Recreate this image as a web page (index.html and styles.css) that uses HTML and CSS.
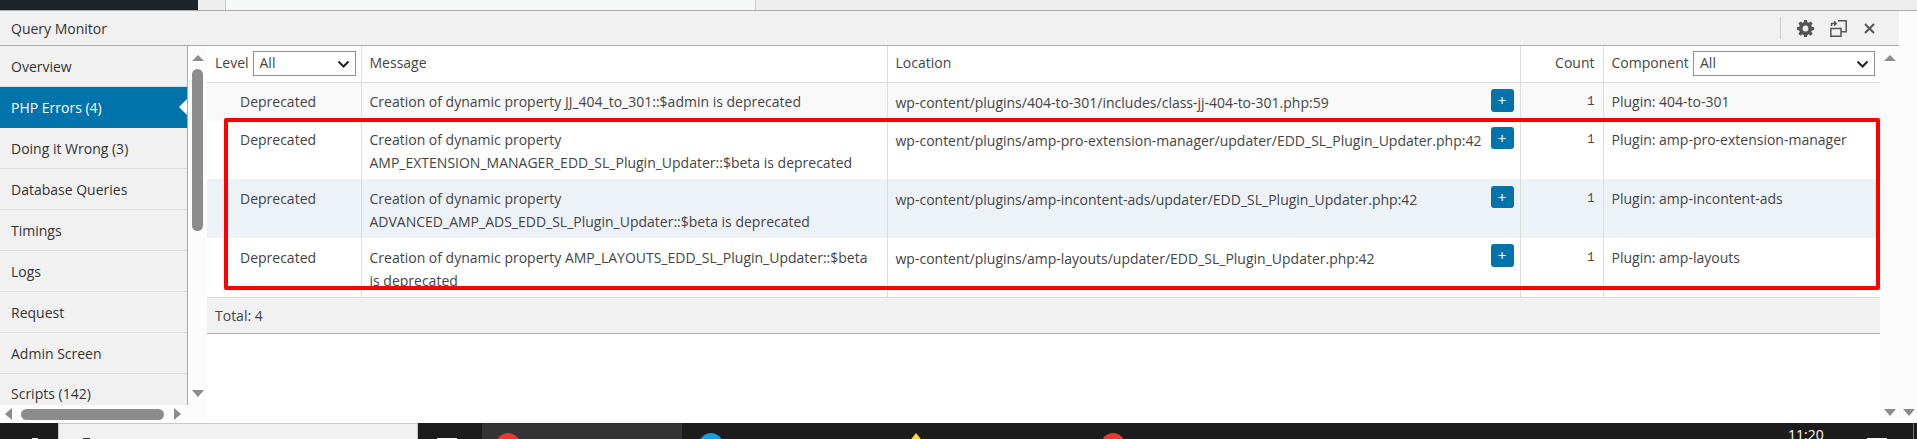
FILE: index.html
```html
<!DOCTYPE html>
<html lang="en">
<head>
<meta charset="utf-8">
<title>Query Monitor</title>
<link rel="stylesheet" href="styles.css">
</head>
<body>
<div class="topbar"><div class="tb-dark"></div><div class="tb-grey"></div><div class="tb-tab"></div><div class="tb-rest"></div></div>
<div class="workspace">
  <div class="panel">
    <header class="qm-head">
      <span class="qm-title">Query Monitor</span>
      <div class="qm-tools">
        <svg class="gear" width="17" height="17" viewBox="0 0 20 20"><path fill="#555" d="M8.3 0h3.4l.5 2.7 1.5.6 2.3-1.6 2.4 2.4-1.6 2.3.6 1.5 2.6.5v3.4l-2.6.5-.6 1.5 1.6 2.3-2.4 2.4-2.3-1.6-1.5.6-.5 2.6H8.3l-.5-2.6-1.5-.6L4 18.5l-2.4-2.4 1.6-2.3-.6-1.5L0 11.8V8.4l2.6-.5.6-1.5-1.6-2.3L4 1.7l2.3 1.6 1.5-.6zM10 6.6a3.4 3.4 0 1 0 0 6.8 3.4 3.4 0 0 0 0-6.8z"/></svg>
        <svg class="toggle" width="17" height="17" viewBox="0 0 17 17" fill="none" stroke="#555" stroke-width="1.5"><path d="M8 .8h8.2v11H11M.8 8.5h10.2v7.7H.8z"/><path d="M1.5 6V3.5h4M4 1.2l2.2 2.3L4 5.6"/></svg>
        <svg class="close" width="11" height="11" viewBox="0 0 11 11" stroke="#555" stroke-width="2"><path d="M1 1l9 9M10 1l-9 9"/></svg>
      </div>
    </header>
    <div class="qm-body">
      <nav class="side">
        <div class="side-list">
          <a class="side-item">Overview</a>
          <a class="side-item active">PHP Errors (4)</a>
          <a class="side-item">Doing it Wrong (3)</a>
          <a class="side-item">Database Queries</a>
          <a class="side-item">Timings</a>
          <a class="side-item">Logs</a>
          <a class="side-item">Request</a>
          <a class="side-item">Admin Screen</a>
          <a class="side-item clipped">Scripts (142)</a>
        </div>
        <div class="hscroll">
          <i class="arrow-l"></i><i class="hthumb"></i><i class="arrow-r"></i>
        </div>
      </nav>
      <div class="vscroll">
        <i class="arrow-u"></i><i class="vthumb"></i><i class="arrow-d"></i>
      </div>
      <main class="content">
        <table class="errors">
          <colgroup><col class="c-level"><col class="c-msg"><col class="c-loc"><col class="c-count"><col class="c-comp"></colgroup>
          <thead>
            <tr>
              <th class="has-filter"><span class="filter">Level<span class="select s-level">All<svg width="13" height="8" viewBox="0 0 13 8" fill="none" stroke="#222" stroke-width="2"><path d="M1.5 1.5l5 5 5-5"/></svg></span></span></th>
              <th>Message</th>
              <th>Location</th>
              <th class="num">Count</th>
              <th class="has-filter"><span class="filter">Component<span class="select s-comp">All<svg width="13" height="8" viewBox="0 0 13 8" fill="none" stroke="#222" stroke-width="2"><path d="M1.5 1.5l5 5 5-5"/></svg></span></span></th>
            </tr>
          </thead>
          <tbody>
            <tr class="r1">
              <td class="lvl">Deprecated</td>
              <td>Creation of dynamic property JJ_404_to_301::$admin is deprecated</td>
              <td class="loc"><div class="loc-in"><span class="path">wp-content/plugins/404-to-301/includes/class-jj-404-to-301.php:59</span><b class="plus">+</b></div></td>
              <td class="num">1</td>
              <td>Plugin: 404-to-301</td>
            </tr>
            <tr class="r2">
              <td class="lvl">Deprecated</td>
              <td>Creation of dynamic property<br>AMP_EXTENSION_MANAGER_EDD_SL_Plugin_Updater::$beta is deprecated</td>
              <td class="loc"><div class="loc-in"><span class="path">wp-content/plugins/amp-pro-extension-manager/updater/EDD_SL_Plugin_Updater.php:42</span><b class="plus">+</b></div></td>
              <td class="num">1</td>
              <td>Plugin: amp-pro-extension-manager</td>
            </tr>
            <tr class="r3">
              <td class="lvl">Deprecated</td>
              <td>Creation of dynamic property<br>ADVANCED_AMP_ADS_EDD_SL_Plugin_Updater::$beta is deprecated</td>
              <td class="loc"><div class="loc-in"><span class="path">wp-content/plugins/amp-incontent-ads/updater/EDD_SL_Plugin_Updater.php:42</span><b class="plus">+</b></div></td>
              <td class="num">1</td>
              <td>Plugin: amp-incontent-ads</td>
            </tr>
            <tr class="r4">
              <td class="lvl">Deprecated</td>
              <td>Creation of dynamic property AMP_LAYOUTS_EDD_SL_Plugin_Updater::$beta<br>is deprecated</td>
              <td class="loc"><div class="loc-in"><span class="path">wp-content/plugins/amp-layouts/updater/EDD_SL_Plugin_Updater.php:42</span><b class="plus">+</b></div></td>
              <td class="num">1</td>
              <td>Plugin: amp-layouts</td>
            </tr>
          </tbody>
        </table>
        <div class="total">Total: 4</div>
      </main>
      <div class="vscroll right">
        <i class="arrow-u"></i><i class="arrow-d"></i>
      </div>
    </div>
  </div>
  <aside class="outer-scroll"><i class="arrow-d"></i></aside>
  <div class="redbox"></div>
</div>
<footer class="taskbar">
  <div class="tk-start"><i class="bit b-start"></i></div>
  <div class="tk-search"><i class="bit b-search"></i></div>
  <div class="tk-view"><i class="bit b-view"></i></div>
  <div class="tk-active"><i class="dot red"></i></div>
  <div class="tk-rest">
    <i class="dot blue"></i>
    <i class="star"></i>
    <i class="dot red second"></i>
    <span class="clock">11:20</span>
    <i class="bit b-notif"></i>
    <i class="tk-edge"></i>
  </div>
</footer>
</body>
</html>
```
FILE: styles.css
```css
* { box-sizing: border-box; }
html, body { margin: 0; height: 439px; overflow: hidden; }
body { font-family: "Open Sans", "Noto Sans", sans-serif; font-size: 14px; color: #444; background: #fff; display: flex; flex-direction: column; }
i { display: block; }

.topbar { height: 11px; display: flex; border-bottom: 1px solid #aaa; flex: none; }
.tb-dark { width: 198px; background: #1d2327; }
.tb-grey { width: 28px; background: #eee; border-right: 1px solid #ccc; }
.tb-tab { width: 530px; background: #f6f7f7; border-right: 1px solid #ccc; }
.tb-rest { flex: 1; background: #eee; }

.workspace { position: relative; flex: none; height: 412px; display: flex; }
.panel { width: 1899px; display: flex; flex-direction: column; flex: none; }
.outer-scroll { flex: 1; background: #fcfcfc; position: relative; }
.outer-scroll .arrow-d { position: absolute; left: 4px; top: 398px; }

.qm-head { height: 35px; flex: none; background: #f1f1f1; border-bottom: 1px solid #aaa; display: flex; align-items: center; justify-content: space-between; padding-left: 11px; color: #333; }
.qm-tools { height: 22px; display: flex; align-items: center; border-left: 1px solid #ccc; margin-right: 24px; padding-left: 16px; gap: 16px; }
.close { margin-left: 1px; }

.qm-body { flex: 1; min-height: 0; display: flex; }
.side { width: 188px; flex: none; display: flex; flex-direction: column; }
.side-list { height: 359px; background: #f1f1f1; border-right: 1px solid #aaa; overflow: hidden; flex: none; }
.side-item { display: flex; align-items: center; height: 41px; padding-left: 11px; border-bottom: 1px solid #ddd; color: #333; position: relative; }
.side-item.active { background: #0073aa; color: #fff; border-bottom-color: #0073aa; }
.side-item.active::after { content: ""; position: absolute; right: 0; top: 12px; border: 8px solid transparent; border-right-color: #fff; border-left-width: 0; }
.side-item.clipped { border-bottom: 0; height: 37px; padding-top: 2px; }
.hscroll { flex: 1; background: #fcfcfc; display: flex; align-items: center; padding-left: 5px; }
.hthumb { width: 143px; height: 11px; border-radius: 6px; background: #8c8c8c; margin: 0 10px 0 9px; }
.arrow-l { width: 0; height: 0; border: 6.5px solid transparent; border-right: 7px solid #8c8c8c; border-left-width: 0; }
.arrow-r { width: 0; height: 0; border: 6.5px solid transparent; border-left: 7px solid #8c8c8c; border-right-width: 0; }

.vscroll { width: 19px; flex: none; background: #fcfcfc; display: flex; flex-direction: column; align-items: center; padding-top: 9px; }
.vthumb { width: 11px; height: 162px; border-radius: 6px; background: #8c8c8c; margin-top: 8px; }
.arrow-u { width: 0; height: 0; border: 6.5px solid transparent; border-bottom: 6px solid #8c8c8c; border-top-width: 0; }
.arrow-d { width: 0; height: 0; border: 6.5px solid transparent; border-top: 7px solid #8c8c8c; border-bottom-width: 0; }
.vscroll .arrow-d { margin-top: auto; margin-bottom: 26px; }
.vscroll.right .arrow-d { margin-bottom: 7px; }

.content { width: 1673px; flex: none; background: #fff; }
.errors { width: 100%; table-layout: fixed; border-collapse: collapse; color: #444; }
.c-level { width: 154px; }
.c-msg { width: 526px; }
.c-loc { width: 633px; }
.c-count { width: 83px; }
.errors th, .errors td { padding: 0 8px; text-align: left; vertical-align: top; font-weight: 400; border-left: 1px solid #ddd; line-height: 22.7px; }
.errors th:first-child, .errors td:first-child { border-left: 0; }
.errors th { height: 36px; vertical-align: middle; border-bottom: 1px solid #ddd; }
.errors th.has-filter { padding-right: 5px; }
.errors .num { text-align: right; }
.filter { display: flex; align-items: center; height: 25px; }
.select { margin-left: auto; display: flex; align-items: center; justify-content: space-between; height: 25px; border: 1px solid #8f8f8f; padding: 0 5px 0 6px; color: #444; background: #fff; }
.s-level { width: 103px; }
.s-comp { width: 182px; }
.errors td { padding-top: 8px; }
.errors .r3 td, .errors .r4 td { padding-top: 9px; }
.errors td.lvl { padding-left: 33px; }
.errors td.num { font-family: "Liberation Mono", monospace; font-size: 12px; }
.r1 td { height: 39px; background: #f9f9f9; }
.r2 td { height: 58px; background: #fff; }
.r4 td { height: 59px; background: #fff; }
.r3 td { height: 59px; background: #edf2f9; }
.loc-in { display: flex; justify-content: space-between; align-items: flex-start; }
.path { margin-top: 1px; }
.plus { width: 23px; height: 23px; border-radius: 3px; background: #0073aa; color: #fff; font-weight: 400; font-size: 15px; line-height: 22px; text-align: center; margin: -2px -2px 0 0; flex: none; }
.r2 .plus, .r3 .plus { height: 22px; }
.r3 .plus { margin-top: -2px; }
.r4 .plus { margin-top: -3px; }

.total { height: 37px; background: #f1f1f1; border-top: 1px solid #ddd; border-bottom: 1px solid #aaa; padding-left: 8px; display: flex; align-items: center; color: #444; }

.redbox { position: absolute; left: 224px; top: 107px; width: 1656px; height: 172px; border: 4px solid #f00; border-radius: 2px; pointer-events: none; }

.taskbar { flex: 1; display: flex; background: #1c1c1c; overflow: hidden; position: relative; }
.tk-start { width: 58px; }
.tk-search { width: 360px; background: #f1f1f1; border: 1px solid #c8c8c8; border-bottom: 0; }
.tk-view { width: 64px; }
.tk-active { width: 200px; background: #333; position: relative; }
.tk-rest { flex: 1; position: relative; color: #fff; }
.dot { position: absolute; top: 10px; width: 24px; height: 24px; border-radius: 50%; }
.tk-active .dot { left: 14px; }
.red { background: #e53935; }
.blue { background: #1e9be0; left: 17px; }
.red.second { left: 419px; }
.star { position: absolute; left: 226px; top: 10px; width: 0; height: 0; border: 8px solid transparent; border-bottom: 10px solid #fdd835; border-top: 0; }
.clock { position: absolute; left: 1106px; top: 5px; font-size: 14px; line-height: 14px; }
.bit { position: absolute; top: 15px; height: 1px; background: #eee; }
.b-start { left: 32px; width: 6px; }
.b-search { left: 83px; width: 7px; background: #333; }
.b-view { left: 437px; width: 20px; }
.b-notif { left: 1185px; width: 20px; }
.tk-edge { position: absolute; left: 1231px; top: 0; bottom: 0; width: 1px; background: #777; }
```
